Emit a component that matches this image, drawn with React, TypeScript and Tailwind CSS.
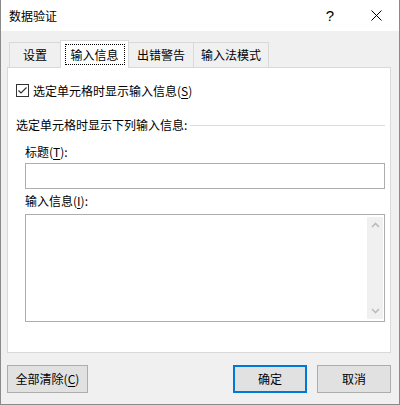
import React from "react";

const Tab = ({ label, active }: { label: string; active?: boolean }) => {
  if (active) {
    return (
      <div className="relative z-10 -mb-px -ml-px flex h-[28px] w-[69px] items-start justify-center border border-b-0 border-[#d9d9d9] bg-white pt-[3px]">
        <div className="flex h-[21px] w-[60px] items-center justify-center border border-dotted border-black">
          {label}
        </div>
      </div>
    );
  }
  return (
    <div className="-ml-px flex h-[25px] items-center justify-center border border-b-0 border-[#d9d9d9] bg-[#f0f0f0] px-[1px] first:ml-0">
      {label}
    </div>
  );
};

const Chevron = ({ up }: { up?: boolean }) => (
  <svg width="9" height="6" viewBox="0 0 9 6">
    <path
      d={up ? "M1 5 L4.5 1.5 L8 5" : "M1 1 L4.5 4.5 L8 1"}
      fill="none"
      stroke="#bcbcbc"
      strokeWidth="1.6"
    />
  </svg>
);

const Button = ({ children, primary, className }: { children: React.ReactNode; primary?: boolean; className?: string }) => (
  <div
    className={`flex h-[28px] items-center justify-center bg-[#e1e1e1] ${
      primary ? "border-2 border-[#0078d7]" : "border border-[#adadad]"
    } ${className ?? ""}`}
  >
    {children}
  </div>
);

export default function App() {
  return (
    <div className="flex h-[405px] w-[400px] flex-col border-x border-b border-[#8a8a8a] bg-[#f0f0f0] font-['Noto_Sans_CJK_SC','Liberation_Sans',sans-serif] text-[12px] leading-[16px] text-black">
      {/* title bar */}
      <div className="flex h-[31px] items-center bg-white">
        <span className="pl-[8px] text-[12px]">数据验证</span>
        <div className="flex-1" />
        <div className="flex h-full w-[46px] items-center justify-center font-['Liberation_Sans',sans-serif] text-[15px]">?</div>
        <div className="flex h-full w-[46px] items-center justify-center">
          <svg width="11" height="11" viewBox="0 0 11 11">
            <path d="M0.5 0.5 L10.5 10.5 M10.5 0.5 L0.5 10.5" stroke="#000" strokeWidth="1" />
          </svg>
        </div>
      </div>

      <div className="flex flex-col pl-[6px] pr-[8px]">
        {/* tabs */}
        <div className="mt-[9px] flex h-[27px] items-end pl-[2px]">
          <div className="-ml-0 flex h-[25px] w-[52px] items-center justify-center border border-b-0 border-[#d9d9d9] bg-[#f0f0f0]">
            设置
          </div>
          <Tab label="输入信息" active />
          <div className="-ml-px flex h-[25px] w-[66px] items-center justify-center border border-b-0 border-[#d9d9d9] bg-[#f0f0f0]">
            出错警告
          </div>
          <div className="-ml-px flex h-[25px] w-[76px] items-center justify-center border border-b-0 border-[#d9d9d9] bg-[#f0f0f0]">
            输入法模式
          </div>
        </div>

        {/* panel */}
        <div className="flex h-[286px] flex-col border border-[#d9d9d9] bg-white pl-[8px] pr-[5px]">
          <div className="mt-[16px] flex h-[13px] items-center">
            <div className="flex h-[13px] w-[13px] items-center justify-center border border-[#333]">
              <svg width="11" height="11" viewBox="0 0 11 11">
                <path d="M1.5 5.5 L4 8 L9.5 2.5" fill="none" stroke="#333" strokeWidth="1.2" />
              </svg>
            </div>
            <span className="ml-[4px]">
              选定单元格时显示输入信息(<span className="underline underline-offset-2">S</span>)
            </span>
          </div>

          <div className="mt-[19px] flex h-[18px] items-center">
            <span className="pr-[3px]">选定单元格时显示下列输入信息:</span>
            <div className="h-px flex-1 bg-[#dcdcdc]" />
          </div>

          <div className="flex flex-col pl-[9px]">
            <div className="mt-[9px] flex h-[18px] items-center">
              标题(<span className="underline underline-offset-2">T</span>):
            </div>
            <div className="mt-[2px] h-[26px] w-[360px] border border-[#adadad] bg-white" />

            <div className="mt-[3px] flex h-[18px] items-center">
              输入信息(<span className="underline underline-offset-2">I</span>):
            </div>
            <div className="mt-[4px] flex h-[108px] w-[360px] border border-[#adadad] bg-white py-[2px] pr-[1px]">
              <div className="flex-1" />
              <div className="flex w-[16px] flex-col items-center justify-between bg-[#f0f0f0] py-[5px]">
                <Chevron up />
                <Chevron />
              </div>
            </div>
          </div>
        </div>

        {/* buttons */}
        <div className="mt-[12px] flex items-center">
          <Button className="w-[81px]">
            全部清除(<span className="underline underline-offset-2">C</span>)
          </Button>
          <div className="flex-1" />
          <Button primary className="w-[74px]">
            确定
          </Button>
          <Button className="ml-[10px] w-[74px]">取消</Button>
        </div>
      </div>
    </div>
  );
}
